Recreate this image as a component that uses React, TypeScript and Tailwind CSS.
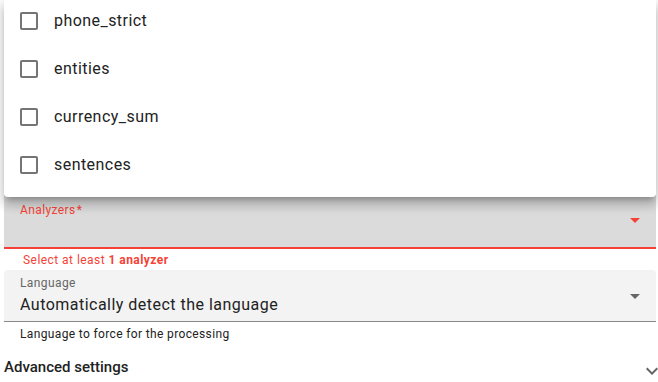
import React from "react";

const Box = () => (
  <svg width="24" height="24" viewBox="0 0 24 24" className="shrink-0" fill="#757575">
    <path d="M19 5v14H5V5h14m0-2H5c-1.11 0-2 .9-2 2v14c0 1.1.89 2 2 2h14c1.1 0 2-.9 2-2V5c0-1.1-.9-2-2-2z" />
  </svg>
);

const Drop = ({ color }: { color: string }) => (
  <svg width="24" height="24" viewBox="0 0 24 24" fill={color} className="absolute right-[9px] top-1/2 -translate-y-1/2">
    <path d="M7 10l5 5 5-5z" />
  </svg>
);

export default function App() {
  const items = ["phone_strict", "entities", "currency_sum", "sentences"];
  return (
    <div className="relative w-[658px] h-[382px] overflow-hidden bg-white font-['Roboto',sans-serif]">
      <div className="flex flex-col pt-[193px] pl-[4px] w-[656px]">
        {/* Analyzers field */}
        <div className="relative h-[56px] bg-[#dbdbdb] rounded-t-[4px] border-b-2 border-[#f44336]">
          <div className="absolute left-[16px] top-[9px] text-[12px] leading-[16px] text-[#f44336] tracking-[0.4px]">
            Analyzers<span className="ml-[1px]">*</span>
          </div>
          <Drop color="#f44336" />
        </div>
        <div className="mt-[1px] ml-[19px] text-[12px] leading-[20px] text-[#f44336] tracking-[0.45px]">
          Select at least <span className="font-bold">1 analyzer</span>
        </div>
        {/* Language field */}
        <div className="relative h-[52px] bg-[#f3f3f3] rounded-t-[4px] border-b border-[#8a8a8a]">
          <div className="absolute left-[16px] top-[5px] text-[12px] leading-[16px] text-[#666666] tracking-[0.4px]">Language</div>
          <div className="absolute left-[16px] top-[23px] text-[16px] leading-[24px] text-[#222222] tracking-[0.48px]">
            Automatically detect the language
          </div>
          <Drop color="#666666" />
        </div>
        <div className="mt-[2px] ml-[16px] text-[12px] leading-[20px] text-[#222222] tracking-[0.36px]">
          Language to force for the processing
        </div>
        <div className="relative mt-[11px] flex items-center h-[24px]">
          <span className="text-[15px] font-medium text-[#222222]">Advanced settings</span>
          <svg width="24" height="24" viewBox="0 0 24 24" fill="#666666" className="absolute left-[636px] top-[4px]">
            <path d="M16.59 8.59 12 13.17 7.41 8.59 6 10l6 6 6-6z" />
          </svg>
        </div>
      </div>

      {/* Menu overlay */}
      <div className="absolute left-[4px] top-0 w-[652px] h-[197px] bg-white rounded-b-[4px] overflow-hidden shadow-[0px_5px_5px_-3px_rgba(0,0,0,0.2),0px_8px_10px_1px_rgba(0,0,0,0.14),0px_3px_14px_2px_rgba(0,0,0,0.12)]">
        <div className="-mt-[3px] flex flex-col">
          {items.map((t) => (
            <div key={t} className="h-[48px] flex items-center pl-[13px]">
              <Box />
              <span className="ml-[13px] text-[16px] text-[#222222] tracking-[0.45px]">{t}</span>
            </div>
          ))}
        </div>
      </div>
    </div>
  );
}
